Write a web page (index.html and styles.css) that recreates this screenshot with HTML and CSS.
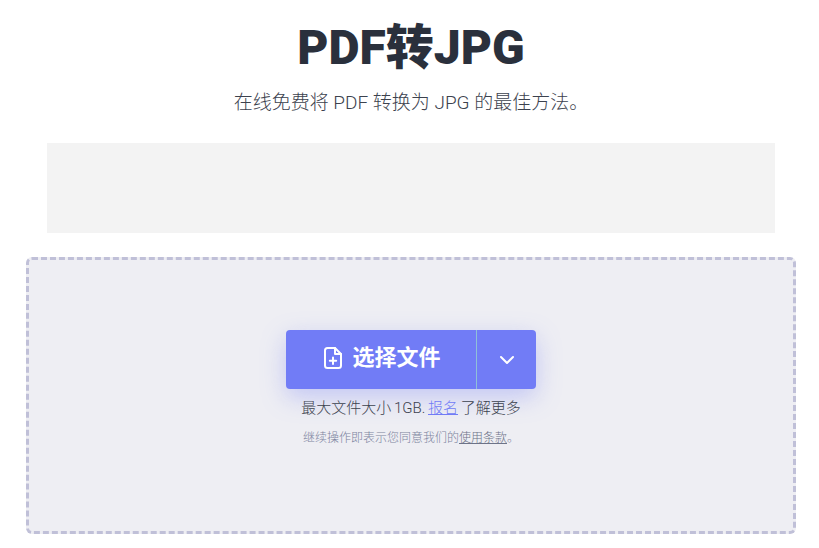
FILE: index.html
```html
<!DOCTYPE html>
<html lang="zh-CN">
<head>
<meta charset="UTF-8">
<meta name="viewport" content="width=device-width, initial-scale=1.0">
<title>PDF转JPG</title>
<link rel="stylesheet" href="styles.css">
</head>
<body>

<div class="page">
  <h1>PDF转JPG</h1>
  <p class="subtitle">在线免费将 PDF 转换为 JPG 的最佳方法。</p>

  <div class="ad-slot"></div>

  <div class="dropzone">
    <div class="upload-button">
      <button class="upload-main" type="button">
        <svg class="file-icon" viewBox="0 0 20 24" width="20" height="24" fill="none" stroke="#fff" stroke-width="2" stroke-linecap="round" stroke-linejoin="round">
          <path d="M12 2H4.500A2.500 2.500 0 0 0 2 4.500v15A2.500 2.500 0 0 0 4.500 22h11a2.500 2.500 0 0 0 2.500-2.500V8z"/>
          <path d="M12 2v6h6"/>
          <path d="M10 11.500v6.500M6.800 14.800h6.400"/>
        </svg>
        <span>选择文件</span>
      </button>
      <button class="upload-more" type="button">
        <svg viewBox="0 0 16 10" width="16" height="10" fill="none" stroke="#fff" stroke-width="2" stroke-linecap="round" stroke-linejoin="round">
          <path d="M2 2l6 6 6-6"/>
        </svg>
      </button>
    </div>
    <p class="limit">最大文件大小 1GB. <a href="#">报名</a> 了解更多</p>
    <p class="terms">继续操作即表示您同意我们的<a href="#">使用条款</a>。</p>
  </div>
</div>

</body>
</html>
```

FILE: styles.css
```css
body {
    margin: 0;
    background: #ffffff;
    font-family: Roboto, "Noto Sans CJK SC", sans-serif;
    color: #2a303c;
}

.page {
    display: flex;
    flex-direction: column;
    align-items: center;
    padding: 0 23px 14px 26px;
}

h1 {
    margin: 16px 0 0;
    font-size: 48px;
    line-height: 64px;
    font-weight: 900;
    color: #2a303c;
}

.subtitle {
    margin: 9px 0 0;
    font-size: 19px;
    line-height: 28px;
    font-weight: 300;
    color: #3c424e;
}

.ad-slot {
    width: 728px;
    height: 90px;
    margin-top: 26px;
    background: #f3f3f3;
}

.dropzone {
    box-sizing: border-box;
    width: 770px;
    height: 277px;
    margin-top: 24px;
    padding-top: 70px;
    display: flex;
    flex-direction: column;
    align-items: center;
    background: #eeeef3;
    border: 3px dashed #c0c0d8;
    border-radius: 6px;
}

.upload-button {
    display: flex;
    height: 59px;
    border-radius: 4px;
    background: #717cf6;
    box-shadow: 0 8px 24px rgba(113, 124, 246, 0.35);
}

.upload-button button {
    border: none;
    background: none;
    color: #ffffff;
    cursor: pointer;
    font-family: inherit;
    display: flex;
    align-items: center;
    justify-content: center;
    padding: 0;
}

.upload-main {
    width: 191px;
    gap: 9px;
    font-size: 22px;
    font-weight: 700;
    border-right: 1px solid #8fc0d8 !important;
}

.upload-main span {
    padding-bottom: 10px;
}

.file-icon {
    margin: 0 0 3px 2px;
}

.upload-more {
    width: 59px;
}

.limit {
    margin: 9px 0 0;
    font-size: 15px;
    line-height: 20px;
    font-weight: 300;
    word-spacing: -1px;
    color: #3c424e;
}

.limit a {
    color: #717cf6;
}

.terms {
    margin: 11px 0 0;
    font-size: 12px;
    line-height: 18px;
    font-weight: 300;
    color: #7d84a0;
}

.terms a {
    color: #6d7388;
}
```
